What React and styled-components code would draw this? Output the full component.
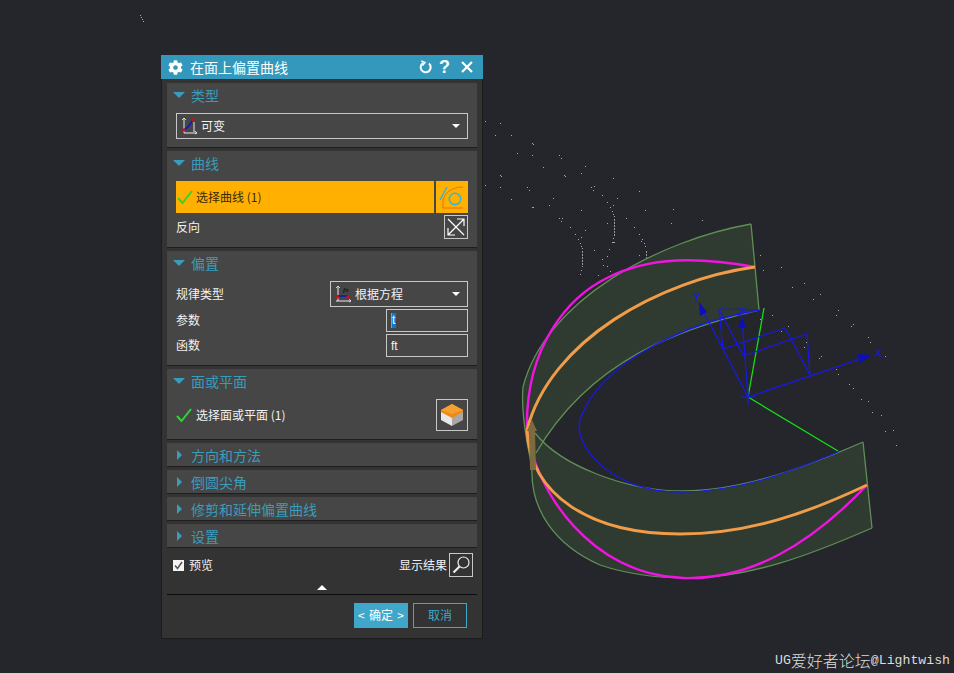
import React from 'react';
import styled, { createGlobalStyle } from 'styled-components';
import { FaCog } from 'react-icons/fa';

const GlobalStyle = createGlobalStyle`
  html, body {
    margin: 0;
    padding: 0;
    background: #24262b;
  }
`;

const Viewport = styled.div`
  position: relative;
  width: 954px;
  height: 673px;
  overflow: hidden;
  background: #24262b;
  font-family: "Noto Sans CJK SC", "Liberation Sans", sans-serif;
`;

const Canvas = styled.svg`
  position: absolute;
  inset: 0;
`;

const Dialog = styled.div`
  position: absolute;
  left: 161px;
  top: 55px;
  width: 322px;
  height: 584px;
  box-sizing: border-box;
  display: flex;
  flex-direction: column;
  background: #333333;
  border: 1px solid #1c1c1c;
  border-top: 0;
`;

const TitleBar = styled.div`
  height: 24px;
  margin: 0 -1px;
  flex: none;
  display: flex;
  align-items: center;
  padding: 0 10px 0 7px;
  background: #3398bb;
  color: #ffffff;
`;

const Title = styled.span`
  flex: 1;
  margin: 0 0 1px 7px;
  font-size: 14px;
  line-height: 22px;
`;

const TitleTools = styled.div`
  display: flex;
  align-items: center;
`;

const HelpMark = styled.span`
  width: 10px;
  margin: 0 12px 0 7px;
  text-align: center;
  font: bold 18px/24px "Liberation Sans", sans-serif;
`;

const Body = styled.div`
  flex: 1;
  display: flex;
  flex-direction: column;
  gap: 3px;
  padding: 4px 5px 0;
`;

const Section = styled.section`
  background: #464646;
  border-bottom: 1px solid #1f1f1f;
  padding: ${p => (p.$collapsed ? '0' : '0 9px 8px')};
`;

const SectionHead = styled.div`
  box-sizing: border-box;
  height: ${p => (p.$collapsed ? '23px' : '26px')};
  margin-bottom: ${p => (p.$collapsed ? '0' : '4px')};
  margin-left: ${p => (p.$collapsed ? '10px' : '-3px')};
  padding-bottom: ${p => (p.$collapsed ? '0' : '2px')};
  display: flex;
  align-items: center;
  gap: ${p => (p.$collapsed ? '9px' : '6px')};
  color: #3a9cbd;
  font-size: 14px;
  line-height: 22px;
`;

const ArrowDown = styled.i`
  width: 0;
  height: 0;
  border-left: 6px solid transparent;
  border-right: 6px solid transparent;
  border-top: 6px solid #3a9cbd;
`;

const ArrowRight = styled.i`
  width: 0;
  height: 0;
  border-top: 5px solid transparent;
  border-bottom: 5px solid transparent;
  border-left: 5px solid #3a9cbd;
`;

// nudges the CJK text up a pixel inside its centred row
const Label = styled.span`
  flex: ${p => (p.$grow ? 1 : 'none')};
  margin-bottom: 2px;
`;

const Select = styled.div`
  box-sizing: border-box;
  height: 26px;
  width: ${p => p.$width || '100%'};
  display: flex;
  align-items: center;
  gap: 2px;
  padding: 0 7px 0 4px;
  border: 1px solid #c8c8c8;
  color: #f2f2f2;
  font-size: 12px;
`;

const Caret = styled.i`
  width: 0;
  height: 0;
  border-left: 4px solid transparent;
  border-right: 4px solid transparent;
  border-top: 4px solid #ffffff;
`;

const PickRow = styled.div`
  display: flex;
  gap: 2px;
  height: 32px;
`;

const PickBar = styled.div`
  flex: 1;
  display: flex;
  align-items: center;
  gap: 3px;
  padding-left: 1px;
  background: #ffb000;
  color: #3a2a00;
  font-size: 12px;
`;

const PickIcon = styled.div`
  width: 32px;
  display: flex;
  align-items: center;
  justify-content: center;
  background: #ffb000;
`;

const FieldRow = styled.div`
  display: flex;
  align-items: center;
  justify-content: space-between;
  margin-top: ${p => p.$gap || 0}px;
  color: #f2f2f2;
  font-size: 12px;
`;

const IconButton = styled.div`
  box-sizing: border-box;
  width: ${p => p.$size}px;
  height: ${p => p.$size}px;
  display: flex;
  align-items: center;
  justify-content: center;
  border: 1px solid #c8c8c8;
`;

const TextInput = styled.div`
  box-sizing: border-box;
  width: 82px;
  height: 23px;
  padding-left: 4px;
  display: flex;
  align-items: center;
  border: 1px solid #c8c8c8;
  color: #f2f2f2;
  font: 12px "Liberation Sans", sans-serif;
`;

const Selected = styled.span`
  display: inline-block;
  width: 5px;
  height: 15px;
  line-height: 15px;
  background: #0a78d7;
  border-left: 1px solid #e08a30;
  box-sizing: border-box;
  color: #ffffff;
`;

const CheckLabel = styled.div`
  display: flex;
  align-items: center;
  gap: ${p => p.$gap || 3}px;
`;

const Footer = styled.div`
  flex: 1;
  display: flex;
  flex-direction: column;
  color: #f2f2f2;
  font-size: 12px;
`;

const PreviewRow = styled.div`
  display: flex;
  align-items: center;
  justify-content: space-between;
  margin: 2px 4px 0 6px;
  height: 24px;
`;

const CheckBox = styled.span`
  width: 11px;
  height: 11px;
  display: flex;
  align-items: center;
  justify-content: center;
  background: #f4f4f4;
`;

const ResultGroup = styled.div`
  display: flex;
  align-items: center;
  gap: 2px;
`;

const FoldBar = styled.div`
  height: 18px;
  display: flex;
  justify-content: center;
  align-items: flex-end;
  padding-bottom: 4px;
  box-sizing: border-box;
  border-bottom: 1px solid #0c0c0c;
`;

const FoldArrow = styled.i`
  width: 0;
  height: 0;
  border-left: 5px solid transparent;
  border-right: 5px solid transparent;
  border-bottom: 5px solid #ffffff;
`;

const Actions = styled.div`
  display: flex;
  justify-content: flex-end;
  gap: 5px;
  margin: 8px 10px 0 0;
`;

const OkButton = styled.div`
  box-sizing: border-box;
  width: 54px;
  height: 25px;
  display: flex;
  align-items: center;
  justify-content: space-between;
  padding: 0 4px;
  background: #3fa7c9;
  color: #ffffff;
  font-size: 12px;
`;

const CancelButton = styled.div`
  box-sizing: border-box;
  width: 54px;
  height: 25px;
  display: flex;
  align-items: center;
  justify-content: center;
  border: 1px solid #3fa7c9;
  color: #3fa7c9;
  font-size: 12px;
`;

const Watermark = styled.div`
  position: absolute;
  left: 775px;
  top: 651px;
  display: flex;
  align-items: center;
  height: 18px;
  color: #dcdcdc;
`;

const MarkLatin = styled.span`
  font: 13.2px "Liberation Mono", monospace;
`;

const MarkCjk = styled.span`
  font-size: 16px;
  line-height: 18px;
  font-weight: 300;
`;

const upperOuter = 'M751 224C660 240 545 300 523 387C521 410 526 440 532 467';
const upperInner = 'M759 310C680 328 590 360 536 453';
const lowerInner = 'M535 433C560 465 625 491 683 491C745 491 810 465 863 442';
const lowerOuter = 'M532 467C530 510 555 545 600 565C630 575 660 578 687 578C750 578 810 555 872 528';
const upperFill = `${upperOuter}L536 453C590 360 680 328 759 310Z`;
const lowerFill = `${lowerInner}L872 528C810 555 750 578 687 578C660 578 630 575 600 565C555 545 530 510 532 467Z`;
const magenta = 'M755 267C700 257 650 256 607 278C570 296 525 345 527 430C535 490 590 575 683 578C750 580 810 545 867 485';
const orange = 'M755 267C660 280 550 340 527 430C530 495 590 534 680 534C750 534 810 512 867 485';
const blueCurve = 'M759 310C690 322 600 360 580 420C573 445 610 492 680 492C740 492 790 472 838 452';

const axisLines = [
  [748, 397, 872, 355], [748, 397, 700, 305], [748, 397, 742, 318],
  [719, 309, 723, 349], [719, 309, 743, 355], [723, 349, 785, 328],
  [743, 356, 807, 334], [785, 328, 810, 375], [807, 334, 810, 375],
  [719, 309, 759, 310], [741, 397, 755, 397], [748, 391, 748, 405],
];

const dots = [
  [485,121],[500,123],[495,135],[511,135],[532,143],[533,144],[517,153],[532,155],[559,155],[561,158],
  [543,167],[585,166],[581,173],[500,175],[501,176],[564,175],[565,176],[613,178],[485,185],[500,187],
  [527,187],[529,190],[591,187],[594,186],[593,190],[639,191],[602,195],[511,199],[553,198],[617,198],
  [607,202],[549,205],[613,205],[610,207],[532,207],[533,207],[581,210],[645,210],[673,209],[612,211],
  [613,214],[614,216],[559,218],[562,218],[561,221],[626,218],[702,220],[671,223],[607,223],[570,227],
  [634,227],[585,230],[575,234],[639,234],[581,237],[578,239],[613,238],[642,239],[641,241],[705,241],
  [580,243],[644,243],[581,246],[645,246],[582,248],[594,250],[609,249],[670,252],[639,255],[607,256],
  [602,259],[603,265],[607,266],[610,271],[581,270],[580,274],[598,275],[645,270],[644,274],[673,273],
  [699,270],[612,242],[613,242],[614,242],[760,255],[763,270],[781,267],[734,252],[728,287],[792,287],
  [804,283],[820,294],[813,299],[838,310],[836,315],[772,315],[749,299],[731,302],[760,319],[788,326],
  [781,331],[853,324],[851,326],[868,337],[870,342],[885,356],[806,342],[804,347],[821,356],[819,358],
  [836,369],[838,374],[849,384],[853,388],[861,399],[868,401],[872,412],[881,415],[885,431],[893,430],
  [896,445],[702,294],[635,297],[623,297],[613,307],[598,339],[141,17],[142,19],[143,21],[140,15],
];

const dashed = [[614, 219, 236], [582, 251, 267], [646, 251, 268], [614, 283, 300]];

const Scene = () => (
  <Canvas width="954" height="673" viewBox="0 0 954 673">
    <g fill="#a8a8a8">
      {dots.map(([x, y]) => <rect key={`${x}-${y}`} x={x} y={y} width="1" height="1" />)}
    </g>
    {dashed.map(([x, a, b]) => (
      <line key={`${x}-${a}`} x1={x + 0.5} y1={a} x2={x + 0.5} y2={b} stroke="#9a9a9a" strokeDasharray="2 1" />
    ))}
    <path d={upperFill} fill="#2f3a30" />
    <path d={lowerFill} fill="#2f3a30" />
    <g fill="none" stroke="#5f8f55" strokeWidth="1.3">
      <path d={upperOuter} />
      <path d={upperInner} />
      <path d={lowerInner} />
      <path d={lowerOuter} />
      <path d="M751 224L759 310M863 442L872 528" />
    </g>
    <path d={blueCurve} fill="none" stroke="#1818e8" strokeWidth="1.3" />
    <path d="M748 397L764 308M748 397L838 451" stroke="#14e014" strokeWidth="1.3" fill="none" />
    <g stroke="#1818e8" strokeWidth="1.2">
      {axisLines.map(([x1, y1, x2, y2]) => <line key={`${x1}${y1}${x2}${y2}`} x1={x1} y1={y1} x2={x2} y2={y2} />)}
      <path d="M875 349L881 357M881 349L875 357M693 293L696 297L700 293M696 297V302M737 309H745L738 315H746" fill="none" />
    </g>
    <g fill="#0f0fb8">
      <path d="M872 355L857 354L860 363Z" />
      <path d="M699 302L700 316L707 312Z" />
      <path d="M742 318L738 327H746Z" />
      <rect x="739" y="326" width="6" height="2" />
    </g>
    <path d={magenta} fill="none" stroke="#f014e0" strokeWidth="2.4" />
    <path d={orange} fill="none" stroke="#f09c48" strokeWidth="3" />
    <path d="M532 420L537 431L535 431L536 470L530 470L529 431L527 431Z" fill="#7d6a3e" />
  </Canvas>
);

const ReloadIcon = () => (
  <svg width="13" height="14" viewBox="0 0 13 14" fill="none" stroke="#fff" strokeWidth="2">
    <path d="M4.5 2.8A5 5 0 1 0 10 3.6" />
    <path d="M2.2 0.8L6 2.6L3.6 5.6" strokeWidth="1.4" />
  </svg>
);

const CloseIcon = () => (
  <svg width="12" height="12" viewBox="0 0 12 12" stroke="#fff" strokeWidth="2.2">
    <path d="M1 1L11 11M11 1L1 11" />
  </svg>
);

const CheckIcon = () => (
  <svg width="16" height="16" viewBox="0 0 16 16" fill="none" stroke="#2fd62f" strokeWidth="2">
    <path d="M1 9L5.5 14L15 2" />
  </svg>
);

const VariableIcon = () => (
  <svg width="18" height="18" viewBox="0 0 18 18" fill="none">
    <path d="M3 1V16M3 16H16M13 5V15" stroke="#e8e8e8" strokeWidth="1" />
    <path d="M1 3L3 1L5 3M14 14L16 16L14 17" stroke="#e8e8e8" strokeWidth="0.8" />
    <path d="M3 13L7 10L12 3" stroke="#1414c8" strokeWidth="1.6" />
    <circle cx="3" cy="13" r="1.7" fill="#c81414" />
    <circle cx="12" cy="3" r="1.7" fill="#c81414" />
  </svg>
);

const LawIcon = () => (
  <svg width="18" height="18" viewBox="0 0 18 18" fill="none">
    <path d="M3 1V16M1 16H16" stroke="#e8e8e8" strokeWidth="1" />
    <path d="M1 3L3 1L5 3M14 14L16 16L14 17" stroke="#e8e8e8" strokeWidth="0.8" />
    <path d="M2 11H13" stroke="#1414c8" strokeWidth="1.6" />
    <circle cx="2.5" cy="12" r="1.7" fill="#c81414" />
    <circle cx="13" cy="12" r="1.7" fill="#c81414" />
    <text x="8" y="7" fontSize="7" fontStyle="italic" fontWeight="700" fill="#111" fontFamily="Liberation Serif, serif">fx</text>
  </svg>
);

const CurveIcon = () => (
  <svg width="26" height="26" viewBox="0 0 26 26" fill="none">
    <path d="M4 24V18C4 10 12 3 24 3M4 24H24" stroke="#e8701e" strokeWidth="1" />
    <path d="M1 16L8 3" stroke="#28b8e0" strokeWidth="1.4" />
    <circle cx="16" cy="15" r="5.8" stroke="#28b8e0" strokeWidth="1.4" />
  </svg>
);

const FlipIcon = () => (
  <svg width="20" height="20" viewBox="0 0 20 20" fill="none" stroke="#fff" strokeWidth="1.2">
    <path d="M2 2L18 18M18 2L2 18M11 2H18V9M2 11V18H9" />
  </svg>
);

const FaceIcon = () => (
  <svg width="24" height="24" viewBox="0 0 24 24">
    <path d="M1 8L12 14V23L1 17Z" fill="#e8e8e8" />
    <path d="M23 8L12 14V23L23 17Z" fill="#a8a8a8" />
    <path d="M12 1L23 7V9L12 15L1 9V7Z" fill="#f08a14" />
    <path d="M12 1L23 7L12 11L1 7Z" fill="#f5a030" />
  </svg>
);

const LensIcon = () => (
  <svg width="20" height="20" viewBox="0 0 20 20" fill="none" stroke="#f0f0f0">
    <circle cx="12.5" cy="7.5" r="5.5" strokeWidth="1.2" />
    <path d="M8.5 11.5L2.5 17.5" strokeWidth="2.2" />
  </svg>
);

const TickIcon = () => (
  <svg width="9" height="9" viewBox="0 0 9 9" fill="none" stroke="#555" strokeWidth="1.6">
    <path d="M1 4.5L3.5 7.5L8 1" />
  </svg>
);

const CollapsedSection = ({ title }) => (
  <Section $collapsed>
    <SectionHead $collapsed>
      <ArrowRight />
      {title}
    </SectionHead>
  </Section>
);

const OpenHead = ({ title }) => (
  <SectionHead>
    <ArrowDown />
    {title}
  </SectionHead>
);

export default function App() {
  return (
    <Viewport>
      <GlobalStyle />
      <Scene />
      <Dialog>
        <TitleBar>
          <FaCog size={15} color="#fff" />
          <Title>在面上偏置曲线</Title>
          <TitleTools>
            <ReloadIcon />
            <HelpMark>?</HelpMark>
            <CloseIcon />
          </TitleTools>
        </TitleBar>
        <Body>
          <Section>
            <OpenHead title="类型" />
            <Select>
              <VariableIcon />
              <Label $grow>可变</Label>
              <Caret />
            </Select>
          </Section>
          <Section>
            <OpenHead title="曲线" />
            <PickRow>
              <PickBar>
                <CheckIcon />
                <Label>选择曲线 (1)</Label>
              </PickBar>
              <PickIcon>
                <CurveIcon />
              </PickIcon>
            </PickRow>
            <FieldRow $gap={2}>
              <Label>反向</Label>
              <IconButton $size={24}>
                <FlipIcon />
              </IconButton>
            </FieldRow>
          </Section>
          <Section>
            <OpenHead title="偏置" />
            <FieldRow>
              <Label>规律类型</Label>
              <Select $width="138px">
                <LawIcon />
                <Label $grow>根据方程</Label>
                <Caret />
              </Select>
            </FieldRow>
            <FieldRow $gap={2}>
              <Label>参数</Label>
              <TextInput>
                <Selected>t</Selected>
              </TextInput>
            </FieldRow>
            <FieldRow $gap={2}>
              <Label>函数</Label>
              <TextInput>ft</TextInput>
            </FieldRow>
          </Section>
          <Section>
            <OpenHead title="面或平面" />
            <FieldRow>
              <CheckLabel $gap={4}>
                <CheckIcon />
                <Label>选择面或平面 (1)</Label>
              </CheckLabel>
              <IconButton $size={32}>
                <FaceIcon />
              </IconButton>
            </FieldRow>
          </Section>
          <CollapsedSection title="方向和方法" />
          <CollapsedSection title="倒圆尖角" />
          <CollapsedSection title="修剪和延伸偏置曲线" />
          <CollapsedSection title="设置" />
          <Footer>
            <PreviewRow>
              <CheckLabel $gap={5}>
                <CheckBox>
                  <TickIcon />
                </CheckBox>
                <Label>预览</Label>
              </CheckLabel>
              <ResultGroup>
                <Label>显示结果</Label>
                <IconButton $size={24}>
                  <LensIcon />
                </IconButton>
              </ResultGroup>
            </PreviewRow>
            <FoldBar>
              <FoldArrow />
            </FoldBar>
            <Actions>
              <OkButton>
                <Label>&lt;</Label>
                <Label>确定</Label>
                <Label>&gt;</Label>
              </OkButton>
              <CancelButton>
                <Label>取消</Label>
              </CancelButton>
            </Actions>
          </Footer>
        </Body>
      </Dialog>
      <Watermark>
        <MarkLatin>UG</MarkLatin>
        <MarkCjk>爱好者论坛</MarkCjk>
        <MarkLatin>@Lightwish</MarkLatin>
      </Watermark>
    </Viewport>
  );
}
